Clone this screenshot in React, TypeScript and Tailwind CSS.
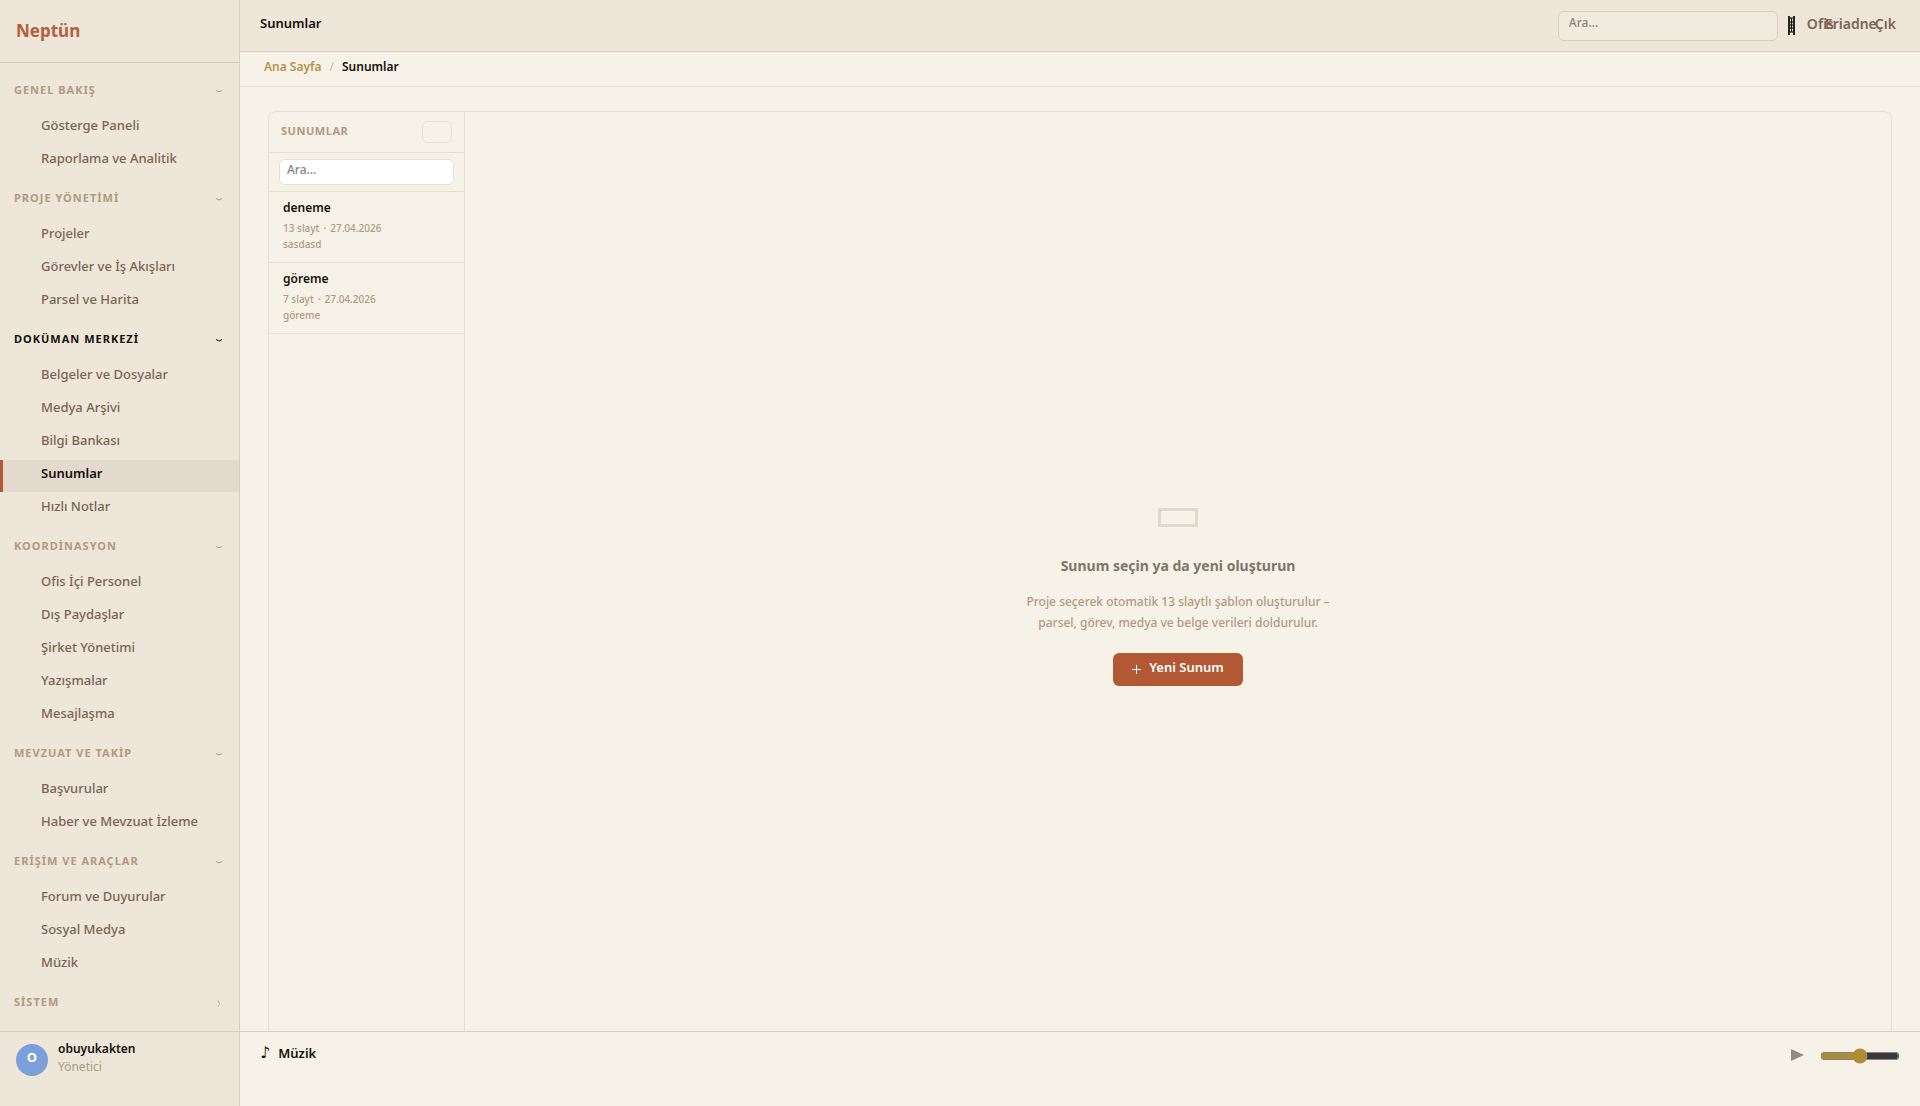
import { useState } from "react";

type NavGroup = {
  title: string;
  items: string[];
  open: boolean;
};

type Deck = {
  id: number;
  name: string;
  slides: number;
  date: string;
  project: string;
};

const NAV: NavGroup[] = [
  { title: "GENEL BAKIŞ", items: ["Gösterge Paneli", "Raporlama ve Analitik"], open: true },
  { title: "PROJE YÖNETİMİ", items: ["Projeler", "Görevler ve İş Akışları", "Parsel ve Harita"], open: true },
  {
    title: "DOKÜMAN MERKEZİ",
    items: ["Belgeler ve Dosyalar", "Medya Arşivi", "Bilgi Bankası", "Sunumlar", "Hızlı Notlar"],
    open: true,
  },
  {
    title: "KOORDİNASYON",
    items: ["Ofis İçi Personel", "Dış Paydaşlar", "Şirket Yönetimi", "Yazışmalar", "Mesajlaşma"],
    open: true,
  },
  { title: "MEVZUAT VE TAKİP", items: ["Başvurular", "Haber ve Mevzuat İzleme"], open: true },
  { title: "ERİŞİM VE ARAÇLAR", items: ["Forum ve Duyurular", "Sosyal Medya", "Müzik"], open: true },
  { title: "SİSTEM", items: [], open: false },
];

const DECKS: Deck[] = [
  { id: 1, name: "deneme", slides: 13, date: "27.04.2026", project: "sasdasd" },
  { id: 2, name: "göreme", slides: 7, date: "27.04.2026", project: "göreme" },
];

const ACTIVE = "Sunumlar";

function Chevron({ open }: { open: boolean }) {
  return (
    <svg width="8" height="8" viewBox="0 0 8 8" fill="none" stroke="currentColor" aria-hidden="true">
      {open ? <path d="M1 3.500Q4 6.500 7 3.500" /> : <path d="M3 1.500Q6 4.500 3 7.500" opacity="0.7" />}
    </svg>
  );
}

function NavSection({ group }: { group: NavGroup }) {
  const current = group.items.includes(ACTIVE);
  return (
    <section>
      <button
        type="button"
        aria-expanded={group.open}
        className={`flex h-[43px] w-full items-center justify-between pr-4 pl-3.5 text-[11px] font-bold tracking-[1px] ${
          current ? "text-[#14100a]" : "text-[#b09a82]"
        }`}
      >
        <span>{group.title}</span>
        <Chevron open={group.open} />
      </button>
      {group.items.length > 0 && (
        <ul className="flex flex-col gap-px">
          {group.items.map((item) => (
            <li key={item}>
              <a
                href="#"
                className={`flex h-8 items-center border-l-3 pb-1 pl-[38px] text-[13px] ${
                  item === ACTIVE
                    ? "border-[#b35835] bg-[#e3d9cc] font-semibold text-[#14100a]"
                    : "border-transparent font-medium text-[#7a6552]"
                }`}
              >
                {item}
              </a>
            </li>
          ))}
        </ul>
      )}
    </section>
  );
}

function Sidebar() {
  return (
    <aside className="flex w-60 shrink-0 flex-col border-r border-[#d9cfbf] bg-[#ede6d9]">
      <div className="flex h-[63px] shrink-0 items-center border-b border-[#d9cfbf] px-4 text-[17px] font-bold text-[#b35f3f]">
        Neptün
      </div>
      <nav className="min-h-0 flex-1 overflow-hidden pt-1.5">
        {NAV.map((group) => (
          <NavSection key={group.title} group={group} />
        ))}
      </nav>
      <div className="flex h-[75px] shrink-0 items-start gap-2.5 border-t border-[#d9cfbf] px-4 pt-3">
        <span className="flex size-8 items-center justify-center rounded-full bg-[#7b9fdb] pb-1 text-[13px] font-bold text-white">
          O
        </span>
        <div className="-mt-1">
          <p className="text-xs leading-[18px] font-semibold text-[#14100a]">obuyukakten</p>
          <p className="text-xs leading-[18px] text-[#b09a82]">Yönetici</p>
        </div>
      </div>
    </aside>
  );
}

function TopBar() {
  return (
    <header className="flex h-[52px] shrink-0 items-center border-b border-[#d9cfbf] bg-[#ede6d9] pr-6 pl-5">
      <h1 className="flex-1 pb-1 text-[13px] font-semibold text-[#14100a]">Sunumlar</h1>
      <input
        type="search"
        aria-label="Ara"
        placeholder="Ara..."
        className="h-[30px] w-[220px] rounded-md border border-[#d9cfbf] bg-[#f1ebdf] px-2.5 pb-1.5 text-xs font-medium placeholder:text-[#8a8378]"
      />
      <button type="button" aria-label="Menü" className="ml-2.5 text-[#14100a]">
        <svg width="7" height="19" viewBox="0 0 7 19" fill="none" stroke="currentColor" aria-hidden="true">
          <path d="M1 0V19M6 0V19" strokeWidth="1.8" />
          <path d="M1 2H6M1 6H6M1 9H6M1 12H6M1 16H6M3.500 2V16" strokeWidth="1.2" />
        </svg>
      </button>
      <div className="ml-3 flex pb-1 text-sm font-semibold text-[#7a6552]">
        <button type="button" className="w-[18px] whitespace-nowrap">
          Ofis
        </button>
        <button type="button" className="w-[50px] whitespace-nowrap">
          Eriadne
        </button>
        <button type="button">Çık</button>
      </div>
    </header>
  );
}

function DeckList() {
  return (
    <div className="flex w-[196px] shrink-0 flex-col border-r border-[#e8e1d3]">
      <div className="flex h-[41px] items-center justify-between border-b border-[#e8e1d3] px-3">
        <h2 className="pb-0.5 text-[11px] font-bold tracking-wider text-[#b09a82]">SUNUMLAR</h2>
        <button type="button" aria-label="Yeni sunum" className="h-[22px] w-[30px] rounded-md border border-[#e8e1d3]" />
      </div>
      <div className="border-b border-[#e8e1d3] px-2.5 py-1.5">
        <input
          type="search"
          aria-label="Sunum ara"
          placeholder="Ara..."
          className="block h-[26px] w-full rounded-md border border-[#e8e1d3] bg-white px-[7px] pb-1.5 text-xs font-medium placeholder:text-[#858585]"
        />
      </div>
      <ul>
        {DECKS.map((deck) => (
          <li key={deck.id} className="h-[71px] border-b border-[#e8e1d3] px-3.5 pt-2">
            <p className="text-xs leading-4 font-semibold text-[#14100a]">{deck.name}</p>
            <div className="mt-1 flex gap-1 text-[10px] leading-4 font-medium text-[#b09a82]">
              <span>{deck.slides} slayt</span>
              <span>·</span>
              <span>{deck.date}</span>
            </div>
            <p className="text-[10px] leading-4 font-medium text-[#b09a82]">{deck.project}</p>
          </li>
        ))}
      </ul>
    </div>
  );
}

function EmptyState() {
  return (
    <div className="flex flex-1 flex-col items-center pt-[396px] text-center">
      <svg width="40" height="19" viewBox="0 0 40 19" fill="none" stroke="#dfd9cc" strokeWidth="3" aria-hidden="true">
        <path d="M1.500 1.500H38.500V17.500H1.500Z" />
      </svg>
      <h2 className="mt-7 text-sm leading-[22px] font-bold text-[#7d766a]">Sunum seçin ya da yeni oluşturun</h2>
      <p className="mt-3.5 w-80 text-xs leading-[21px] font-medium text-[#b09a82]">
        Proje seçerek otomatik 13 slaytlı şablon oluşturulur –<br />
        parsel, görev, medya ve belge verileri doldurulur.
      </p>
      <button
        type="button"
        className="mt-5 flex h-[33px] w-[130px] items-center justify-center gap-2 rounded-md bg-[#b35835] text-[13px] font-semibold text-white"
      >
        <svg width="9" height="9" viewBox="0 0 9 9" stroke="currentColor" aria-hidden="true">
          <path d="M4.500 0V9M0 4.500H9" />
        </svg>
        <span className="pb-1">Yeni Sunum</span>
      </button>
    </div>
  );
}

function MusicBar() {
  const [volume, setVolume] = useState(50);
  return (
    <footer className="flex h-[75px] shrink-0 items-start border-t border-[#d9cfbf] px-5 pt-[11px]">
      <p className="flex flex-1 items-center gap-2 text-[13px] leading-5 font-semibold text-[#14100a]">
        <span className="font-['DejaVu_Sans'] text-base leading-5 font-normal">♪</span>
        Müzik
      </p>
      <button type="button" aria-label="Oynat" className="mt-1.5 mr-4 text-[#918b80]">
        <svg width="13" height="12" viewBox="0 0 13 12" fill="currentColor" aria-hidden="true">
          <path d="M0 0L13 6L0 12Z" />
        </svg>
      </button>
      <input
        type="range"
        aria-label="Ses"
        min={0}
        max={100}
        value={volume}
        onChange={(e) => setVolume(Number(e.target.value))}
        className="mt-[5px] h-4 w-20 accent-[#b08d35] [color-scheme:dark]"
      />
    </footer>
  );
}

export default function App() {
  return (
    <div className="flex h-screen overflow-hidden bg-[#f7f2e7] font-['Noto_Sans',sans-serif] text-[#14100a]">
      <Sidebar />
      <div className="flex min-w-0 flex-1 flex-col">
        <TopBar />
        <nav
          aria-label="Konum"
          className="flex h-[35px] shrink-0 items-center gap-2 border-b border-[#e8e1d3] px-6 pb-1 text-xs font-semibold"
        >
          <a href="#" className="text-[#b5934a]">
            Ana Sayfa
          </a>
          <span className="font-normal text-[#c9bda9]">/</span>
          <span>Sunumlar</span>
        </nav>
        <main className="flex min-h-0 flex-1 overflow-hidden px-7 pt-6">
          <div className="flex flex-1 rounded-t-lg border border-b-0 border-[#e8e1d3]">
            <DeckList />
            <EmptyState />
          </div>
        </main>
        <MusicBar />
      </div>
    </div>
  );
}
